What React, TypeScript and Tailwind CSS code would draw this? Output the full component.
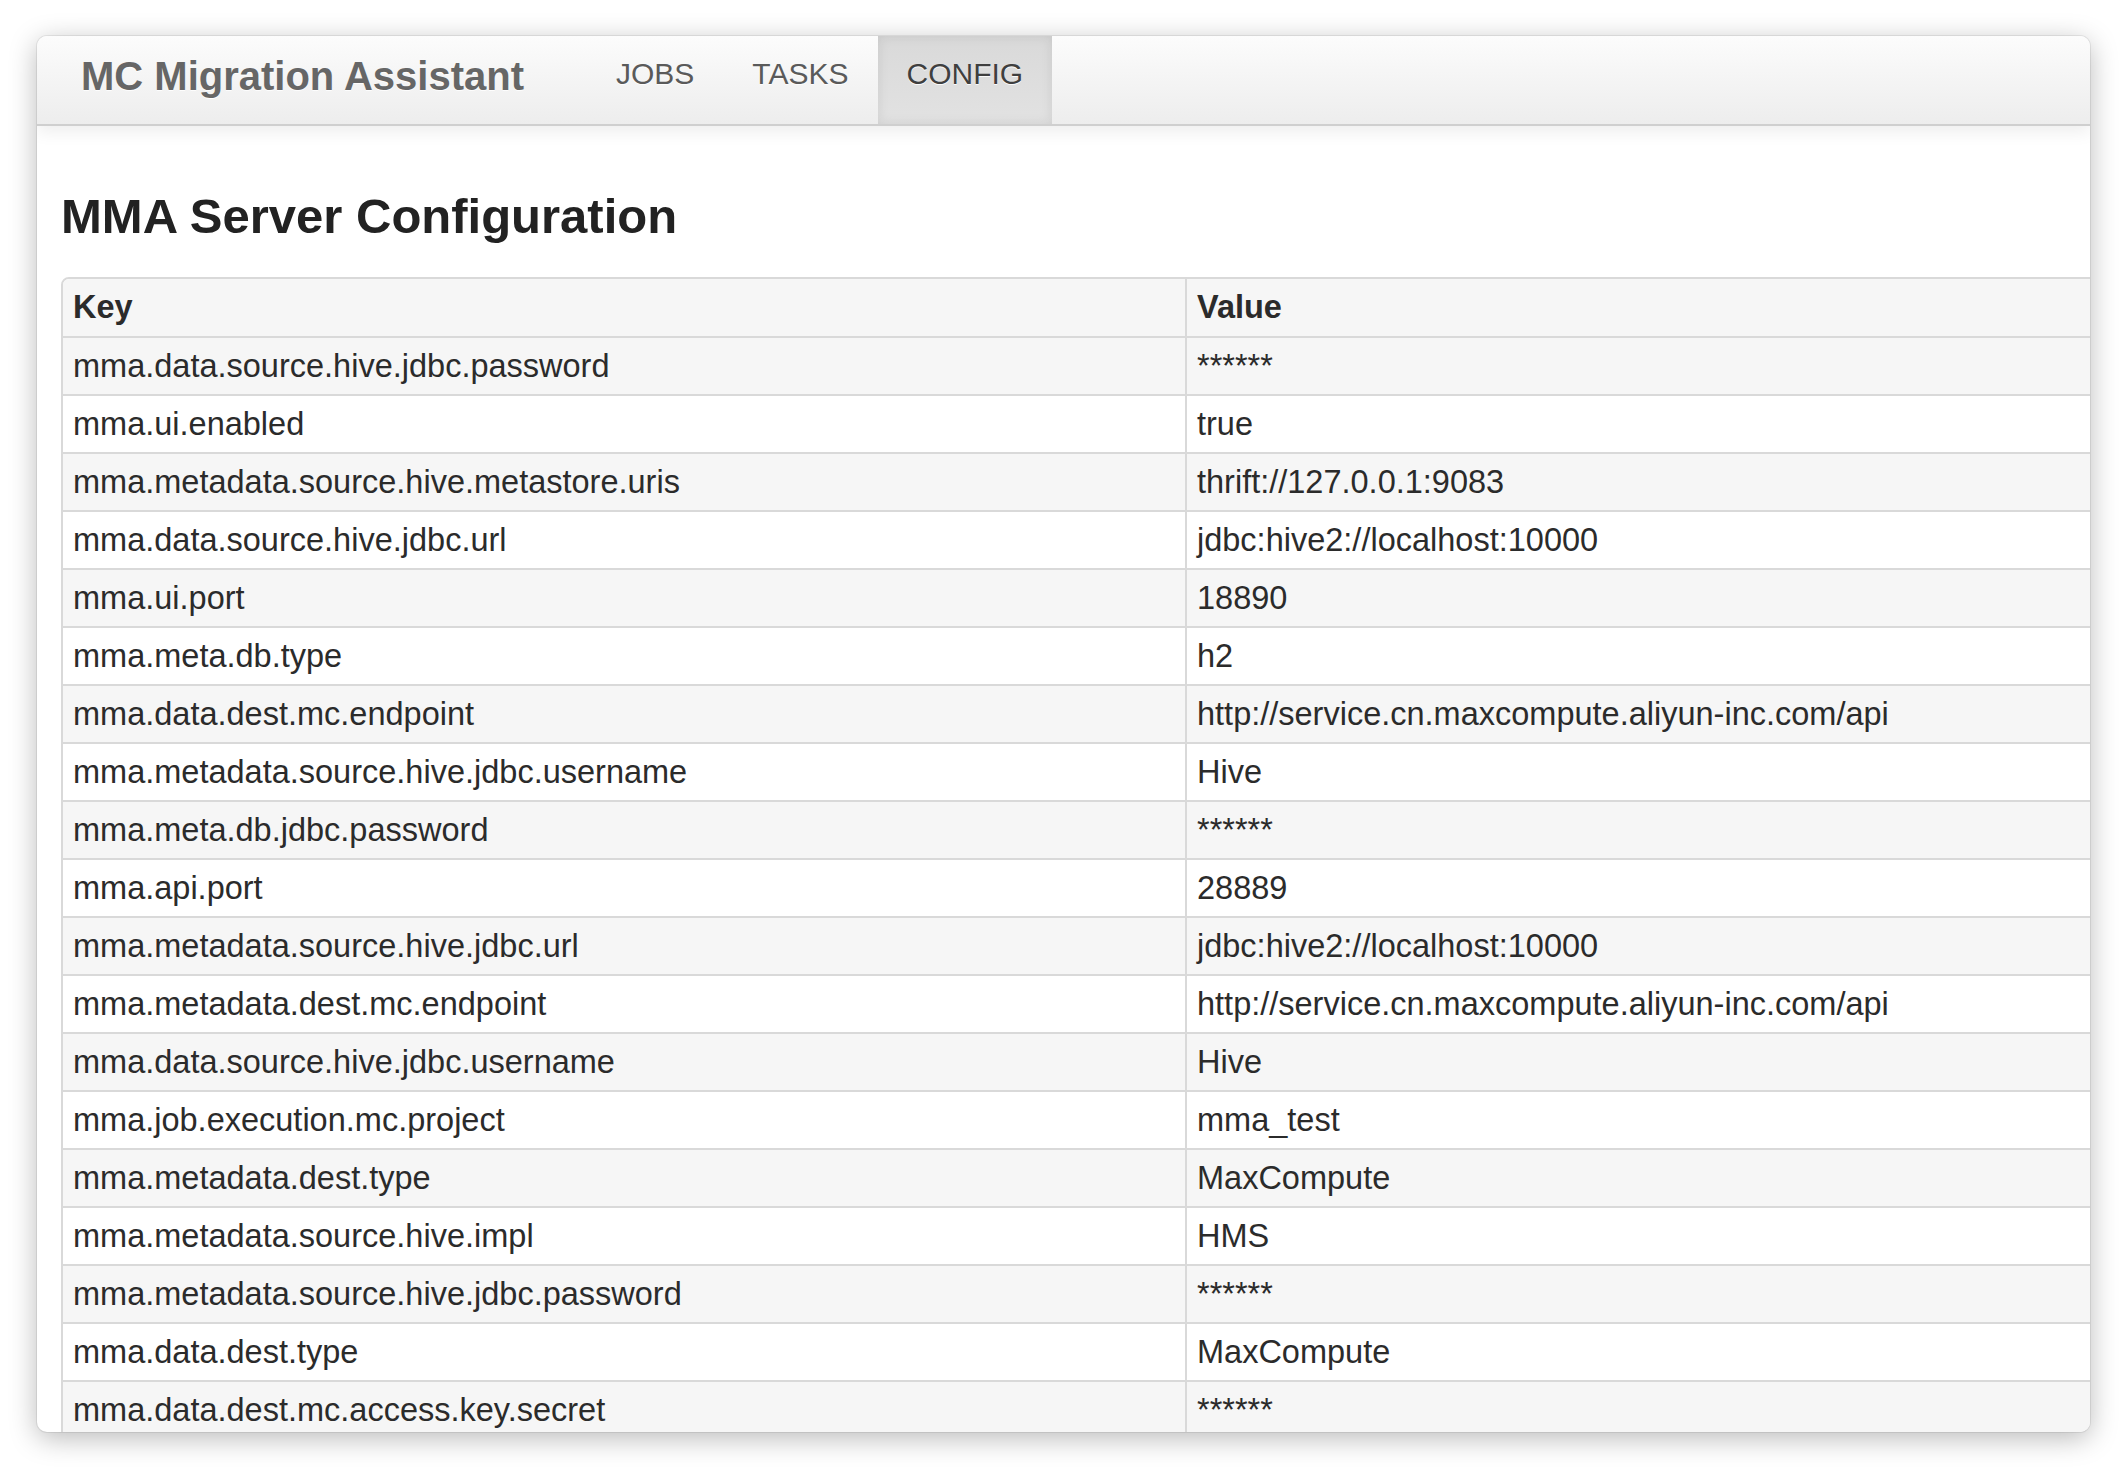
import React from 'react';

type ConfigEntry = {
  key: string;
  value: string;
};

const CONFIG: ConfigEntry[] = [
  { key: 'mma.data.source.hive.jdbc.password', value: '******' },
  { key: 'mma.ui.enabled', value: 'true' },
  { key: 'mma.metadata.source.hive.metastore.uris', value: 'thrift://127.0.0.1:9083' },
  { key: 'mma.data.source.hive.jdbc.url', value: 'jdbc:hive2://localhost:10000' },
  { key: 'mma.ui.port', value: '18890' },
  { key: 'mma.meta.db.type', value: 'h2' },
  { key: 'mma.data.dest.mc.endpoint', value: 'http://service.cn.maxcompute.aliyun-inc.com/api' },
  { key: 'mma.metadata.source.hive.jdbc.username', value: 'Hive' },
  { key: 'mma.meta.db.jdbc.password', value: '******' },
  { key: 'mma.api.port', value: '28889' },
  { key: 'mma.metadata.source.hive.jdbc.url', value: 'jdbc:hive2://localhost:10000' },
  { key: 'mma.metadata.dest.mc.endpoint', value: 'http://service.cn.maxcompute.aliyun-inc.com/api' },
  { key: 'mma.data.source.hive.jdbc.username', value: 'Hive' },
  { key: 'mma.job.execution.mc.project', value: 'mma_test' },
  { key: 'mma.metadata.dest.type', value: 'MaxCompute' },
  { key: 'mma.metadata.source.hive.impl', value: 'HMS' },
  { key: 'mma.metadata.source.hive.jdbc.password', value: '******' },
  { key: 'mma.data.dest.type', value: 'MaxCompute' },
  { key: 'mma.data.dest.mc.access.key.secret', value: '******' },
];

const NAV_ITEMS = ['JOBS', 'TASKS', 'CONFIG'];
const ACTIVE_NAV = 'CONFIG';

type NavLinkProps = {
  label: string;
  active: boolean;
};

const NavLink = ({ label, active }: NavLinkProps) => (
  <a
    href="#"
    className={
      active
        ? 'h-full px-[29px] pt-[18px] text-[30px] leading-[40px] text-[#3f3f3f] bg-gradient-to-b from-[#d9d9d9] to-[#e2e2e2] shadow-[inset_0_0_12px_rgba(0,0,0,0.09)] [text-shadow:0_1px_0_rgba(255,255,255,0.9)]'
        : 'h-full px-[29px] pt-[18px] text-[30px] leading-[40px] text-[#5a5a5a] [text-shadow:0_1px_0_rgba(255,255,255,0.9)]'
    }
  >
    {label}
  </a>
);

const Navbar = () => (
  <nav className="relative z-10 flex h-[90px] shrink-0 border-b-2 border-[#cfcfcf] bg-gradient-to-b from-[#fcfcfc] to-[#ededed] shadow-[0_6px_16px_rgba(0,0,0,0.07)]">
    <div className="w-[550px] shrink-0 pl-[44px] pt-[16px] text-[40px] font-bold leading-[48px] text-[#666666] [text-shadow:0_1px_0_rgba(255,255,255,0.9)]">
      MC Migration Assistant
    </div>
    <div className="flex h-full">
      {NAV_ITEMS.map((item) => (
        <NavLink key={item} label={item} active={item === ACTIVE_NAV} />
      ))}
    </div>
  </nav>
);

const ConfigTable = () => (
  <div className="w-[2080px] overflow-hidden rounded-[8px] border-2 border-[#d9d9d9]">
    <table className="w-full border-collapse text-left text-[32.5px] text-[#2b2b2b]">
      <thead>
        <tr className="bg-[#f6f6f6]">
          <th className="h-[58px] w-[1123px] border-r-2 border-b-2 border-[#d9d9d9] px-[10px] align-middle font-bold leading-[1.2]">
            Key
          </th>
          <th className="h-[58px] border-b-2 border-[#d9d9d9] px-[10px] align-middle font-bold leading-[1.2]">
            Value
          </th>
        </tr>
      </thead>
      <tbody>
        {CONFIG.map((entry, i) => (
          <tr key={entry.key} className={i % 2 === 0 ? 'bg-[#f6f6f6]' : 'bg-white'}>
            <td className="h-[58px] border-r-2 border-b-2 border-[#d9d9d9] px-[10px] align-middle leading-[1.2]">
              {entry.key}
            </td>
            <td className="h-[58px] border-b-2 border-[#d9d9d9] px-[10px] align-middle leading-[1.2]">
              {entry.value}
            </td>
          </tr>
        ))}
      </tbody>
    </table>
  </div>
);

export default function App() {
  return (
    <div className="min-h-screen bg-white pl-[37px] pt-[36px] font-['Liberation_Sans',Arial,sans-serif]">
      <div className="flex h-[1396px] w-[2053px] flex-col overflow-hidden rounded-[10px] bg-white shadow-[0_0_0_1px_rgba(0,0,0,0.07),0_6px_28px_rgba(0,0,0,0.28)]">
        <Navbar />
        <main className="pl-[24px] pt-[66px]">
          <h1 className="mb-[36px] text-[49px] font-bold leading-[49px] text-[#222222]">
            MMA Server Configuration
          </h1>
          <ConfigTable />
        </main>
      </div>
    </div>
  );
}
